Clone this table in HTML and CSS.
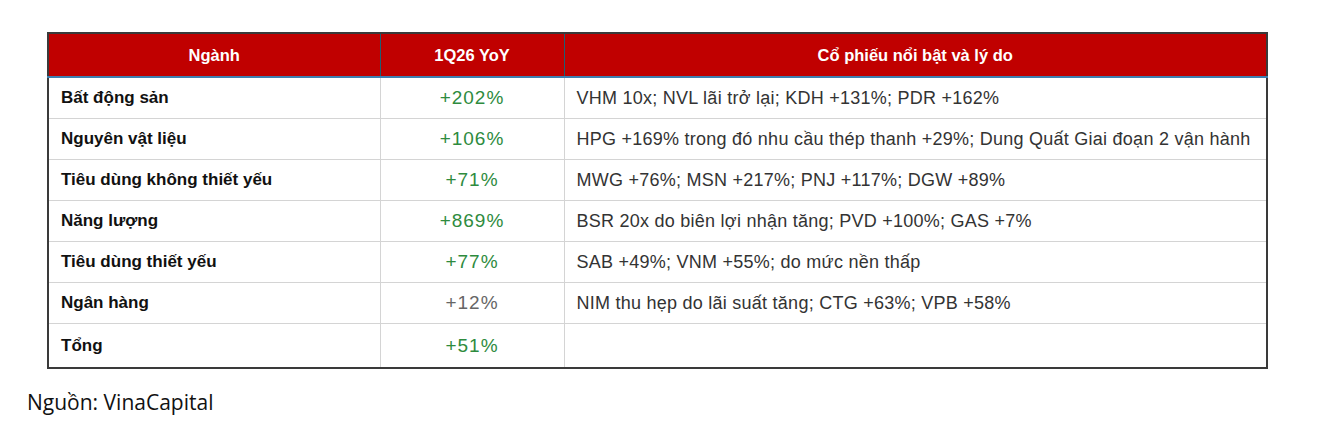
FILE: index.html
```html
<!DOCTYPE html>
<html lang="vi">
<head>
<meta charset="utf-8">
<link rel="stylesheet" href="styles.css">
</head>
<body>
<div class="page">
  <table class="tbl">
    <colgroup>
      <col class="c1"><col class="c2"><col class="c3">
    </colgroup>
    <thead>
      <tr><th>Ngành</th><th>1Q26 YoY</th><th>Cổ phiếu nổi bật và lý do</th></tr>
    </thead>
    <tbody>
      <tr><td class="name">Bất động sản</td><td class="val up">+202%</td><td class="desc">VHM 10x; NVL lãi trở lại; KDH +131%; PDR +162%</td></tr>
      <tr><td class="name">Nguyên vật liệu</td><td class="val up">+106%</td><td class="desc">HPG +169% trong đó nhu cầu thép thanh +29%; Dung Quất Giai đoạn 2 vận hành</td></tr>
      <tr><td class="name">Tiêu dùng không thiết yếu</td><td class="val up">+71%</td><td class="desc">MWG +76%; MSN +217%; PNJ +117%; DGW +89%</td></tr>
      <tr><td class="name">Năng lượng</td><td class="val up">+869%</td><td class="desc">BSR 20x do biên lợi nhận tăng; PVD +100%; GAS +7%</td></tr>
      <tr><td class="name">Tiêu dùng thiết yếu</td><td class="val up">+77%</td><td class="desc">SAB +49%; VNM +55%; do mức nền thấp</td></tr>
      <tr><td class="name">Ngân hàng</td><td class="val flat">+12%</td><td class="desc">NIM thu hẹp do lãi suất tăng; CTG +63%; VPB +58%</td></tr>
      <tr class="last"><td class="name">Tổng</td><td class="val up">+51%</td><td class="desc"></td></tr>
    </tbody>
  </table>
  <p class="source">Nguồn: VinaCapital</p>
</div>
</body>
</html>
```
FILE: styles.css
```css
html, body {
  margin: 0;
  padding: 0;
  background: #ffffff;
}
.page {
  padding: 32px 0 0 47px;
}
.tbl {
  width: 1221px;
  border-collapse: collapse;
  border: 2px solid #3a3a3a;
  font-family: "Liberation Sans", Arial, sans-serif;
  table-layout: fixed;
}
.c1 { width: 332px; }
.c2 { width: 184px; }
.c3 { width: auto; }
.tbl th {
  background: #c00000;
  color: #ffffff;
  font-size: 16.5px;
  font-weight: bold;
  height: 42px;
  padding: 0;
  text-align: center;
  border-left: 1px solid #1f5f73;
  border-bottom: 2px solid #3e7fb0;
}
.tbl th:first-child { border-left: none; }
.tbl td {
  height: 40px;
  padding: 0 0 0 12px;
  font-size: 17px;
  color: #222222;
  border-left: 1px solid #d4d4d4;
  border-top: 1px solid #d4d4d4;
}
.tbl td:first-child { border-left: none; }
.tbl tr.last td { height: 43px; }
.tbl td.name { font-weight: bold; color: #111111; }
.tbl td.val {
  text-align: center;
  padding: 0;
  font-size: 19px;
  letter-spacing: 1px;
}
.tbl td.up { color: #2e8b3e; }
.tbl td.flat { color: #666666; }
.tbl td.desc {
  color: #333333;
  font-size: 18px;
  letter-spacing: 0.25px;
}
.source {
  margin: 19px 0 0 -20px;
  font-family: "Open Sans", "Liberation Sans", sans-serif;
  font-size: 21px;
  color: #111111;
}
```
